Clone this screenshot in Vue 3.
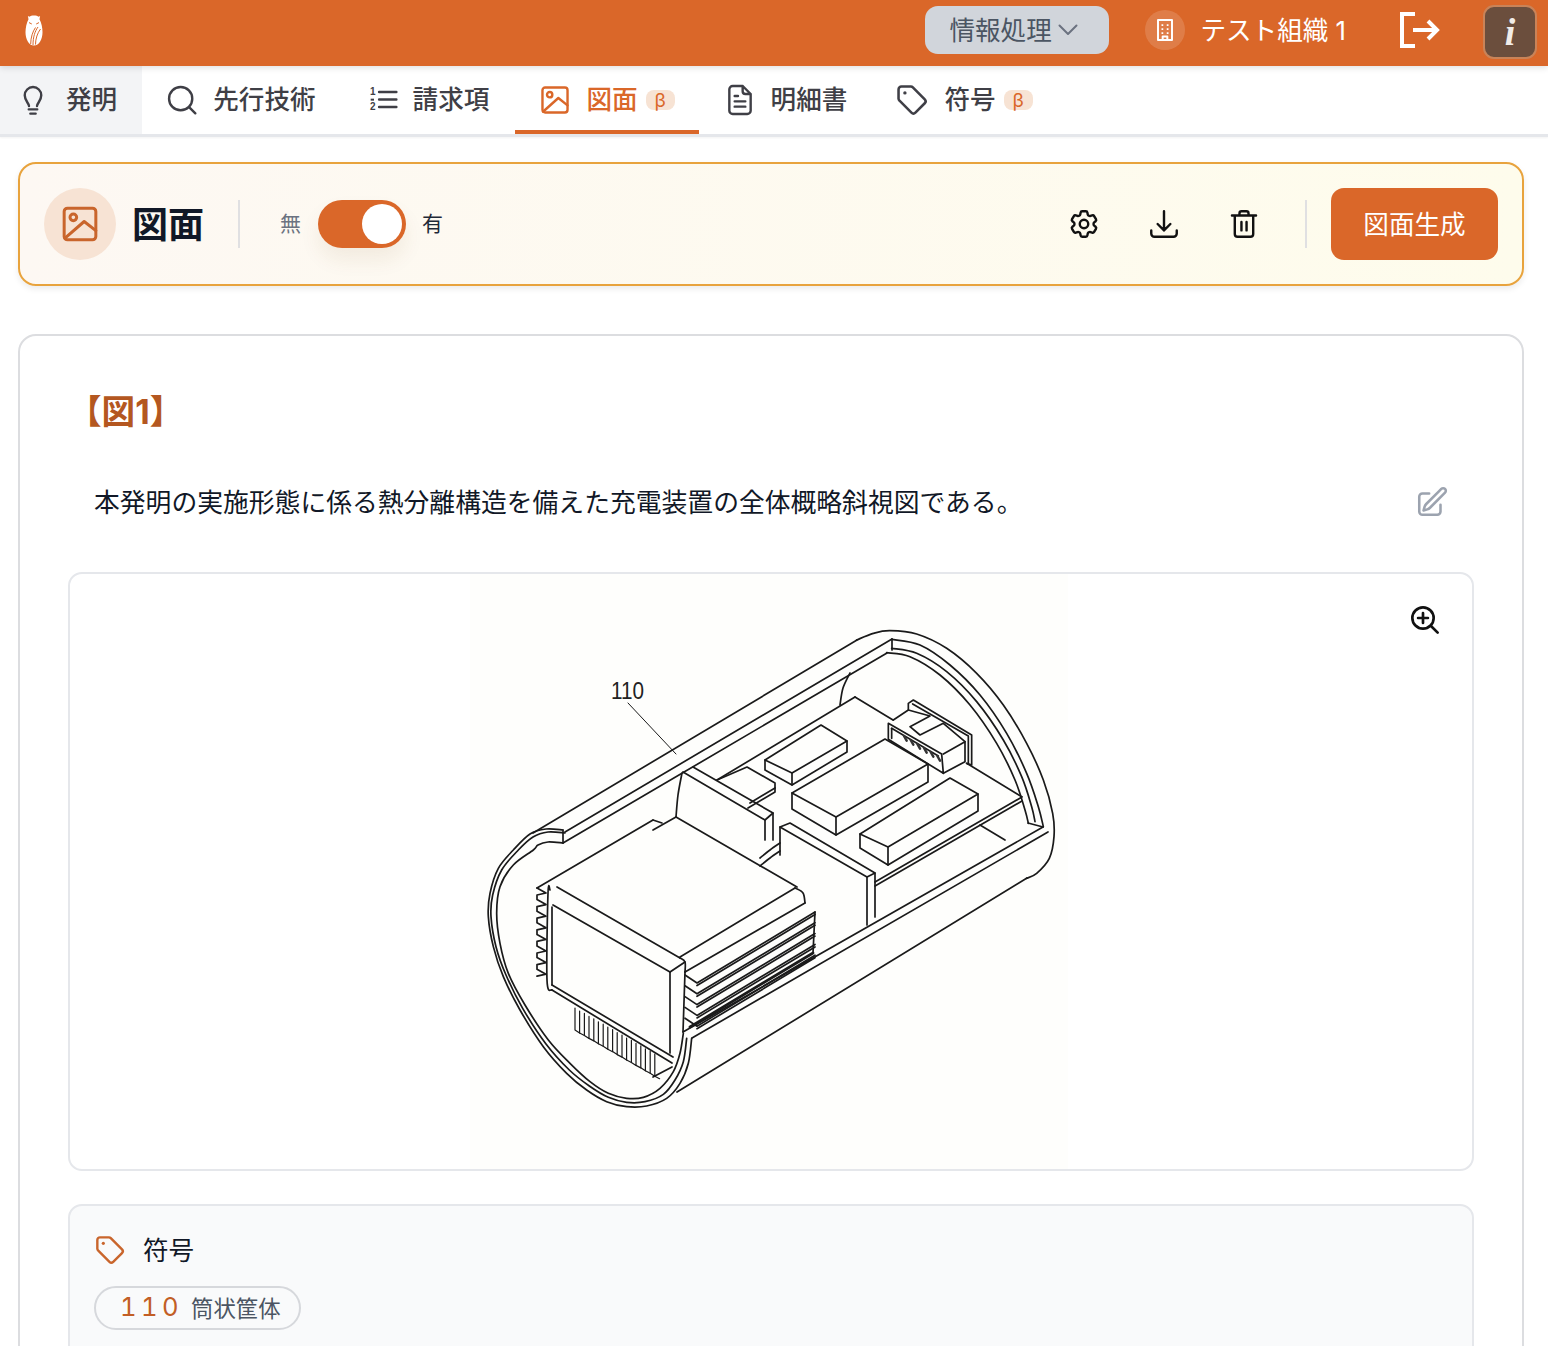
<script setup>
const tabs = [
  { label: '発明', icon: 'bulb', first: true },
  { label: '先行技術', icon: 'search' },
  { label: '請求項', icon: 'list' },
  { label: '図面', icon: 'photo', beta: true, active: true },
  { label: '明細書', icon: 'doc', wide: true },
  { label: '符号', icon: 'tag', beta: true },
]

const P = {
  bulb: 'M9 16.5c0-2.2-3.2-3.7-3.2-8A6.2 6.2 0 0 1 12 2.3a6.2 6.2 0 0 1 6.2 6.2c0 4.3-3.2 5.8-3.2 8M8.8 19h6.4M10 22.2h4',
  doc: 'M14 1.500H6.500A2.500 2.500 0 0 0 4 4v16a2.500 2.500 0 0 0 2.500 2.500h11A2.500 2.500 0 0 0 20 20V7.500zM14 1.500v4a2 2 0 0 0 2 2h4M8 13h8M8 17h8M8 9h2.500',
  tag: 'M4.5 2.5h6.7a2 2 0 0 1 1.4.6l8.4 8.4a2 2 0 0 1 0 2.8l-6.6 6.6a2 2 0 0 1-2.8 0l-8.4-8.4a2 2 0 0 1-.7-1.4V4.5a2 2 0 0 1 2-2z',
  cog: 'M9.594 3.94c.09-.542.56-.94 1.11-.94h2.593c.55 0 1.02.398 1.11.94l.213 1.281c.063.374.313.686.645.87.074.04.147.083.22.127.324.196.72.257 1.075.124l1.217-.456a1.125 1.125 0 0 1 1.37.49l1.296 2.247a1.125 1.125 0 0 1-.26 1.431l-1.003.827c-.293.24-.438.613-.431.992a6.759 6.759 0 0 1 0 .255c-.007.378.138.75.43.99l1.005.828c.424.35.534.954.26 1.43l-1.298 2.247a1.125 1.125 0 0 1-1.369.491l-1.217-.456c-.355-.133-.75-.072-1.076.124a6.57 6.57 0 0 1-.22.128c-.331.183-.581.495-.644.869l-.213 1.28c-.09.543-.56.941-1.11.941h-2.594c-.55 0-1.02-.398-1.11-.94l-.213-1.281c-.062-.374-.312-.686-.644-.87a6.52 6.52 0 0 1-.22-.127c-.325-.196-.72-.257-1.076-.124l-1.217.456a1.125 1.125 0 0 1-1.369-.49l-1.297-2.247a1.125 1.125 0 0 1 .26-1.431l1.004-.827c.292-.24.437-.613.43-.992a6.932 6.932 0 0 1 0-.255c.007-.378-.138-.75-.43-.99l-1.004-.828a1.125 1.125 0 0 1-.26-1.43l1.297-2.247a1.125 1.125 0 0 1 1.37-.491l1.216.456c.356.133.751.072 1.076-.124.072-.044.146-.087.22-.128.332-.183.582-.495.644-.869l.214-1.281zM15 12a3 3 0 1 1-6 0 3 3 0 0 1 6 0z',
  tray: 'M3 16.5v2.25A2.25 2.25 0 0 0 5.25 21h13.5A2.25 2.25 0 0 0 21 18.75V16.5M16.5 12L12 16.5m0 0L7.5 12m4.500 4.500V3',
  trash: 'M3.5 6h17M8.8 6V4.5A1.5 1.5 0 0 1 10.3 3h3.4a1.5 1.5 0 0 1 1.5 1.5V6M5.5 6v13a2 2 0 0 0 2 2h9a2 2 0 0 0 2-2V6M10.2 10.5v6M13.8 10.5v6',
  pencil: 'M16.862 4.487l1.687-1.688a1.875 1.875 0 1 1 2.652 2.652L10.582 16.07a4.5 4.5 0 0 1-1.897 1.13L6 18l.8-2.685a4.5 4.5 0 0 1 1.13-1.897l8.932-8.931zM18 14v4.75A2.25 2.25 0 0 1 15.75 21H5.25A2.25 2.25 0 0 1 3 18.75V8.25A2.25 2.25 0 0 1 5.25 6H10',
}

function smooth(p) {
  let d = `M${p[0][0]} ${p[0][1]}`
  for (let i = 0; i < p.length - 1; i++) {
    const a = p[i - 1] || p[i], b = p[i], c = p[i + 1], e = p[i + 2] || c
    const c1 = [b[0] + (c[0] - a[0]) / 6, b[1] + (c[1] - a[1]) / 6]
    const c2 = [c[0] - (e[0] - b[0]) / 6, c[1] - (e[1] - b[1]) / 6]
    d += `C${c1[0]} ${c1[1]} ${c2[0]} ${c2[1]} ${c[0]} ${c[1]}`
  }
  return d
}
const line = (...p) => 'M' + p.map((q) => q.join(' ')).join('L')
// points were read from two enlarged crops of the drawing
const z7 = (p) => p.map(([x, y]) => [760 + x / 3, 610 + y / 3])
const z8 = (p) => p.map(([x, y]) => [470 + x / 3, 850 + y / 3])

const curves = [
  z7([[290,90],[340,70],[390,62],[470,72],[560,115],[650,190],[730,285],[800,400],[850,510],[878,610],[882,680],[868,745],[830,790],[800,805]]),
  z7([[395,88],[480,105],[570,165],[660,255],[740,370],[800,490],[835,590],[850,650]]),
  z7([[395,115],[470,130],[560,185],[650,275],[730,390],[785,500],[815,590],[825,635]]),
  z7([[380,128],[450,140],[540,195],[630,285],[710,400],[765,510],[795,600],[805,640]]),
  [[563,830],[546,829],[530,834],...z8([[130,0],[85,55],[60,130],[55,200],[70,290],[100,380],[150,480],[220,590],[290,670],[350,720],[410,755],[470,770],[530,768],[590,745],[630,700],[655,640],[665,565]])],
  [[565,833],[548,832],[533,837],...z8([[145,0],[95,60],[68,135],[63,200],[78,290],[108,375],[158,475],[228,582],[298,660],[358,708],[415,742],[470,757],[525,755],[580,733],[615,690],[640,635],[650,565]])],
  [[563,843],[548,842],[538,845],...z8([[190,0],[130,45],[90,110],[80,190],[90,280],[115,370],[165,465],[235,570],[300,640],[360,695],[415,730],[470,745],[520,742],[570,715],[610,665],[630,610],[640,550]])],
  [[682,773],[678,795],[676,817]],
  [[850,673],[843,688],[840,705]],
  [[795,888],[803,893],[805,903]],
  [[680,958],[685,962],[685,972]],
  [[550,890],[548,893],[547,980],[552,990]],
  [[760,858],[770,850],[780,843]],
  [[760,866],[770,858],[780,851]],
]

const lines = [
  [[533,833],[857,640]], [[565,832],[892,639]], [[563,843],[887,653]], [[563,830],[563,843]], [[892,639],[892,650]],
  [[1027,878],[677,1092]],
  [[1043,827],[683,1032]], [[1048,832],[692,1038]], [[1028,823],[1043,827]],
  [[855,697],[717,780]], [[855,697],[893,720]],
  [[1022,797],[875,882]], [[1022,801],[875,886]], [[980,825],[1005,840]],
  [[765,760],[821,725],[847,741],[792,773],[765,760]], [[765,760],[765,770],[792,785],[847,752],[847,741]], [[792,773],[792,785]],
  [[792,793],[885,739],[928,764],[836,817],[792,793]], [[792,793],[792,809],[836,835],[928,782],[928,764]], [[836,817],[836,835]],
  [[860,834],[950,778],[978,794],[888,847],[860,834]], [[860,834],[860,848],[888,865],[978,811],[978,794]], [[888,847],[888,865]],
  [[717,780],[747,767],[775,783],[775,792],[748,808]], [[775,788],[750,803]],
  [[693,767],[773,813],[765,820],[683,772]], [[765,820],[765,840]], [[773,813],[773,840]],
  [[780,827],[790,823],[875,873],[867,877],[780,827]], [[867,877],[867,925]], [[875,873],[875,917]], [[780,827],[780,855]],
  [[676,817],[797,887]], [[676,817],[653,830]], [[653,820],[537,888]], [[653,820],[662,823]],
  [[557,887],[680,958]], [[553,905],[670,972]], [[670,972],[670,1053]], [[552,907],[552,985]],
  [[552,985],[673,1057]], [[552,990],[672,1063]], [[685,972],[683,1032]], [[670,972],[685,962]],
  [[680,957],[795,888]], [[685,972],[805,903]],
  [[653,1077],[672,1067]],
  // connector, from the enlarged crop
  z7([[385,340],[545,432],[550,490],[385,388],[385,340]]),
  z7([[395,355],[535,438]]),
  z7([[395,355],[395,385]]),
  z7([[550,432],[615,395],[615,455],[550,490]]),
  z7([[400,330],[445,300],[445,280],[460,270],[635,375],[635,465],[620,460]]),
  z7([[458,282],[625,378],[625,462]]),
  z7([[445,300],[510,318],[450,350],[480,375],[550,340],[615,395]]),
  z7([[620,460],[785,560]]),
]

for (let i = 0; i < 5; i++) {
  const y = i * 10.8
  lines.push([[685,975 + y],[697,983 + y],[815,912 + y]])
  lines.push([[697,985.5 + y],[815,914.5 + y]])
}
lines.push([[815,912],[813,953]])
const zig = []
for (let i = 0; i < 8; i++) {
  const y = 888 + i * 11.6
  zig.push([537, y], [546, y + 5], [537, y + 7])
}
lines.push(zig)

const teeth = []
for (let i = 0; i < 9; i++) {
  const x = 575 + i * 9.4, y = 1008 + i * 5.4
  teeth.push(line([x, y],[x, y + 22],[x + 4.6, y + 25],[x + 4.6, y + 3]))
  teeth.push(line([x + 4.6, y + 25],[x + 9.4, y + 27.5]))
}

const figure = [...curves.map(smooth), ...lines.map((l) => line(...l))]
const pins = [0, 1, 2, 3, 4, 5].map((i) => line(...z7([[432 + i * 20, 378 + i * 12], [440 + i * 20, 392 + i * 12]])))
</script>

<template>
  <div class="page">
    <header class="top">
      <svg class="owl" viewBox="0 0 18 31" width="18" height="31">
        <path class="owl-body" d="M9 0.5c2 0 3.600.6 4.600 1.200l1.500-.7-.6 3.200c2 4 3 8.500 3 13 0 7-3.400 13.300-8.500 13.300S0.500 24.200 0.500 17.200c0-4.500 1-9 3-13l-.6-3.200 1.500.7C5.400 1.100 7 .5 9 .5z" />
        <path class="owl-line" d="M4 7.600 6.800 9M14 7.600 11.200 9M13 12c-3 4-5 10-5 18M15.500 14c-3 4-5 9.500-5 15.500M10.500 12.500c-2.800 4-4.800 10-4.800 16.500" />
      </svg>
      <div class="select">
        <span>情報処理</span>
        <svg viewBox="0 0 24 24" width="24" height="24"><path class="st" d="M3.500 7.500 12 16l8.500-8.500" /></svg>
      </div>
      <div class="org">
        <span class="org-ic">
          <svg viewBox="0 0 24 24" width="28" height="28">
            <path class="st" d="M6 3.500h12v17H6zM10 20.500v-3h4v3" />
            <path class="dots" d="M9 7h1.500v1.500H9zM13.500 7H15v1.500h-1.500zM9 10.500h1.500V12H9zM13.500 10.500H15V12h-1.500zM9 14h1.500v1.500H9zM13.500 14H15v1.500h-1.500z" />
          </svg>
        </span>
        <span class="org-name">テスト組織 1</span>
      </div>
      <svg class="logout" viewBox="0 0 40 36" width="40" height="36">
        <path class="st" d="M15 2H2v32h13M13 18h24M28 9l9 9-9 9" />
      </svg>
      <div class="info"><span>i</span></div>
    </header>

    <nav class="tabs">
      <a v-for="t in tabs" :key="t.label" class="tab" :class="{ first: t.first, active: t.active, 'has-beta': t.beta, wide: t.wide }">
        <svg class="tab-ic" :class="{ big: t.icon === 'tag' }" viewBox="0 0 24 24">
          <template v-if="t.icon === 'search'">
            <circle class="st" cx="11" cy="11" r="8.700" /><path class="st" d="M17.500 17.500 22 22" />
          </template>
          <template v-else-if="t.icon === 'list'">
            <path class="st" d="M9.800 6h13M9.800 11.600h13M9.800 17.200h13" />
            <text class="num" x="3" y="8.500">1</text><text class="num" x="3" y="19.500">2</text>
            <path class="fl" d="M3.500 11h2.500v1.500h-2.500z" />
          </template>
          <template v-else-if="t.icon === 'photo'">
            <rect class="st" x="2.600" y="2.600" width="18.800" height="18.800" rx="2" /><circle class="st" cx="8" cy="8" r="2" />
            <path class="st" d="M3 20.800 14.500 10.500 21.400 16" />
          </template>
          <template v-else-if="t.icon === 'tag'">
            <path class="st" :d="P.tag" /><circle class="fl" cx="7" cy="7" r="1.200" />
          </template>
          <path v-else class="st" :d="P[t.icon]" />
        </svg>
        <span class="tab-label">{{ t.label }}</span>
        <span v-if="t.beta" class="beta">β</span>
      </a>
    </nav>

    <main class="main">
      <section class="panel">
        <div class="disc">
          <svg viewBox="0 0 24 24" width="40" height="40">
            <rect class="st" x="2.500" y="2.500" width="19" height="19" rx="2" /><circle class="st" cx="8" cy="8" r="2" />
            <path class="st" d="M3 20.500 14.500 10.500 21.500 16" />
          </svg>
        </div>
        <h1 class="title">図面</h1>
        <i class="sep"></i>
        <span class="off">無</span>
        <span class="switch"><b></b></span>
        <span class="on">有</span>
        <div class="tools">
          <svg viewBox="0 0 24 24" width="34" height="34"><path class="st" :d="P.cog" /></svg>
          <svg viewBox="0 0 24 24" width="34" height="34"><path class="st" :d="P.tray" /></svg>
          <svg viewBox="0 0 24 24" width="34" height="34"><path class="st" :d="P.trash" /></svg>
        </div>
        <i class="sep sep-r"></i>
        <button class="gen" type="button"><span>図面生成</span></button>
      </section>

      <section class="card">
        <h2 class="fig-title">【図1】</h2>
        <div class="desc">
          <p>本発明の実施形態に係る熱分離構造を備えた充電装置の全体概略斜視図である。</p>
          <svg viewBox="0 0 24 24" width="34" height="34"><path class="st" :d="P.pencil" /></svg>
        </div>
        <div class="figure">
          <svg class="drawing" viewBox="470 574 602 595" width="602" height="595">
            <rect x="470" y="574" width="598" height="595" fill="#fefefc" />
            <path v-for="(d, i) in figure" :key="i" class="ln" :d="d" />
            <path v-for="(d, i) in teeth" :key="'t' + i" class="ln fine" :d="d" />
            <path class="ln heavy" d="M690 1027 813 953" />
            <path v-for="(d, i) in pins" :key="'p' + i" class="pin" :d="d" />
            <path class="ln thin" d="M628 703 676 754" />
            <text class="ref" x="611" y="699" textLength="33" lengthAdjust="spacingAndGlyphs">110</text>
          </svg>
          <svg class="zoom" viewBox="0 0 24 24" width="32" height="32">
            <circle class="st" cx="10.500" cy="10.500" r="8" /><path class="st" d="M10.500 6.800v7.400M6.800 10.500h7.400M16.500 16.500 21.500 21.500" />
          </svg>
        </div>
        <div class="refs">
          <div class="refs-head">
            <svg viewBox="0 0 24 24" width="32" height="32"><path class="st" :d="P.tag" /><circle class="fl" cx="7" cy="7" r="1.200" /></svg>
            <span>符号</span>
          </div>
          <div class="chip"><span class="chip-no">110</span><span class="chip-name">筒状筐体</span></div>
        </div>
      </section>
    </main>
  </div>
</template>

<style>
html, body { background: #fff; }
</style>

<style scoped>
.page {
  height: 1346px;
  overflow: hidden;
  background: #fff;
  font-family: Inter, "Noto Sans CJK JP", "Noto Sans", sans-serif;
  font-size: 25.6px;
  color: #111827;
}
.st { fill: none; stroke: currentColor; stroke-width: 1.800; stroke-linecap: round; stroke-linejoin: round; }
.fl { fill: currentColor; }

/* top bar */
.top {
  position: relative;
  z-index: 1;
  display: flex;
  align-items: center;
  height: 66px;
  box-sizing: border-box;
  padding-bottom: 6px;
  background: #da6729;
  box-shadow: 0 2px 6px rgba(0, 0, 0, .12);
}
.owl { margin: 0 0 0 25px; }
.owl-body { fill: #fff; }
.owl-line { fill: none; stroke: #da6729; stroke-width: 1; }
.select {
  display: flex;
  align-items: center;
  gap: 4px;
  width: 184px;
  height: 48px;
  box-sizing: border-box;
  margin-left: auto;
  padding-left: 24px;
  background: #d1d5db;
  border-radius: 13px;
  color: #4b5563;
}
.select span { padding-bottom: 4px; }
.select svg { color: #6b7280; }
.select .st { stroke-width: 2; }
.org { display: flex; align-items: center; gap: 15px; margin-left: 36px; color: #fff; }
.org-name { padding-bottom: 4px; }
.org-ic {
  display: flex; align-items: center; justify-content: center;
  width: 40px; height: 40px; border-radius: 50%;
  background: rgba(255, 255, 255, .15);
}
.org-ic .st { stroke-width: 1.700; }
.dots { fill: #fff; }
.logout { margin-left: 54px; color: #fff; }
.logout .st { stroke-width: 4; stroke-linecap: butt; stroke-linejoin: miter; }
.info {
  display: flex; align-items: center; justify-content: center;
  width: 54px; height: 54px; box-sizing: border-box;
  margin: 4px 11px 0 43px;
  background: #6b4e3d;
  border: 2px solid #c98358;
  border-radius: 11px;
  color: #f1ece8;
  font: italic 700 38px "Liberation Serif", serif;
}

/* tabs */
.tabs {
  display: flex;
  height: 68px;
  border-bottom: 3px solid #e5e7eb;
  box-shadow: 0 1px 2px rgba(0, 0, 0, .05);
}
.tab {
  display: flex;
  align-items: center;
  height: 68px;
  box-sizing: border-box;
  padding: 0 26px 0 24px;
  color: #3f3f46;
  font-weight: 500;
}
.tab.first { background: #f3f4f6; padding-left: 17px; padding-right: 25px; }
.tab.first .tab-ic { margin-right: 17px; }
.tab.has-beta { padding-right: 24px; }
.tab.wide { padding-left: 25px; }
.tab.active { color: #da6729; box-shadow: inset 0 -4px 0 #da6729; }
.tab-ic { flex: none; width: 32px; height: 32px; margin-right: 15px; }
.tab-ic.big { width: 34px; height: 34px; margin-left: -2px; margin-right: 15px; }
.tab-label { line-height: 1; white-space: nowrap; }
.beta {
  margin-left: 8px;
  width: 29px; height: 20px;
  border-radius: 8px;
  background: #f7e3d4;
  color: #da6729;
  font-size: 19.200px;
  font-weight: 400;
  line-height: 20px;
  text-align: center;
}
.num { font: 700 7.500px "Liberation Sans", sans-serif; fill: currentColor; }

/* main */
.main { padding: 25px 24px 0 18px; }
.panel {
  display: flex;
  align-items: center;
  height: 124px;
  box-sizing: border-box;
  padding: 0 24px;
  border: 2px solid #e8a33d;
  border-radius: 18px;
  background: linear-gradient(90deg, #fdf8f3, #fefcec);
  box-shadow: 0 3px 6px rgba(0, 0, 0, .08);
}
.disc {
  display: flex; align-items: center; justify-content: center;
  width: 72px; height: 72px; border-radius: 50%;
  background: #f7e3d4; color: #c9652c;
}
.title { margin: 2px 34px 0 16px; font-size: 36px; font-weight: 700; line-height: 1; }
.sep { width: 2px; height: 48px; background: #e0e0e2; }
.off { margin-left: 40px; padding-bottom: 4px; font-size: 21px; color: #6b7280; }
.switch {
  display: flex; align-items: center; justify-content: flex-end;
  width: 88px; height: 48px; box-sizing: border-box; margin-left: 17px; padding-right: 4px;
  border-radius: 24px; background: #da6729;
  box-shadow: 0 12px 20px rgba(120, 80, 30, .08);
}
.switch b { width: 40px; height: 40px; border-radius: 50%; background: #fff; }
.on { margin-left: 16px; padding-bottom: 4px; font-size: 21px; color: #1f2937; }
.tools { display: flex; gap: 46px; margin-left: auto; color: #111; }
.tools .st { stroke-width: 1.700; }
.sep-r { margin-left: 44px; }
.gen {
  width: 167px; height: 72px; margin-left: 24px; padding: 0 0 4px;
  border: 0; border-radius: 13px;
  background: #da6729; color: #fff;
  font: inherit;
}

/* card */
.card {
  margin-top: 48px;
  box-sizing: border-box;
  padding: 50px 48px 0;
  border: 2px solid #dcdde0;
  border-radius: 18px;
}
.fig-title { margin: 0; height: 50px; font-size: 33.600px; line-height: 52px; font-weight: 700; color: #b45720; }
.desc { display: flex; align-items: center; justify-content: space-between; height: 52px; margin-top: 40px; padding: 0 25px 0 26px; }
.desc p { margin: 0; padding-bottom: 4px; font-size: 25.800px; color: #111827; }
.desc svg { color: #9ca3af; }
.desc .st { stroke-width: 1.800; }
.figure {
  position: relative;
  display: flex; justify-content: center;
  height: 599px; box-sizing: border-box;
  margin-top: 44px;
  border: 2px solid #e5e7eb;
  border-radius: 14px;
  background: #fff;
}
.drawing { display: block; }
.ln { fill: none; stroke: #1a1a1a; stroke-width: 1.700; stroke-linejoin: round; stroke-linecap: round; }
.ln.thin { stroke-width: 1; }
.ln.fine { stroke-width: 1.200; }
.ln.heavy { stroke-width: 2.800; }
.pin { fill: none; stroke: #333; stroke-width: 2.500; stroke-linecap: round; }
.ref { font: 24px "Liberation Sans", sans-serif; fill: #222; }
.zoom { position: absolute; top: 30px; right: 31px; color: #111; }
.zoom .st { stroke-width: 2; }
.refs {
  margin-top: 33px;
  height: 300px;
  box-sizing: border-box;
  padding: 28px 24px;
  background: #f9fafb;
  border: 2px solid #e5e7eb;
  border-radius: 14px;
}
.refs-head { display: flex; align-items: center; gap: 17px; height: 32px; }
.refs-head span { padding-bottom: 4px; }
.refs-head svg { color: #c9652c; }
.chip {
  display: inline-flex; align-items: center;
  height: 44px; box-sizing: border-box;
  margin-top: 20px; padding: 0 18px 3px 24px;
  border: 2px solid #d6d8dc; border-radius: 22px;
}
.chip-no { color: #c25e25; letter-spacing: 4.400px; margin-right: 8px; font-variant-numeric: tabular-nums; }
.chip-name { color: #4b5563; font-size: 22.400px; }
</style>
